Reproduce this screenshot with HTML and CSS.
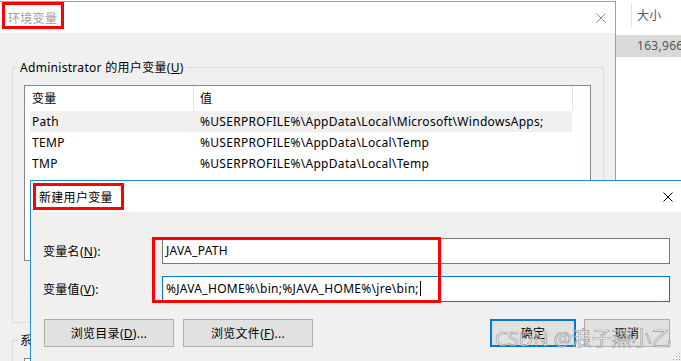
FILE: index.html
```html
<!DOCTYPE html>
<html lang="zh-CN">
<head>
    <meta charset="UTF-8">
    <title>环境变量</title>
    <link rel="stylesheet" href="styles.css">
</head>
<body>

<div class="explorer">
    <div class="ex-head"><span class="ex-col">大小</span></div>
    <div class="ex-row">163,966</div>
</div>

<div class="win env">
    <div class="titlebar">
        <span class="title">环境变量</span>
        <svg class="close" width="10" height="10" viewBox="0 0 10 10"><path d="M0.5 0.5L9.5 9.5M9.5 0.5L0.5 9.5" stroke="#8a8a8a" stroke-width="1"/></svg>
    </div>
    <div class="win-body">
        <fieldset class="group">
            <legend>Administrator 的用户变量(<u>U</u>)</legend>
            <div class="listview">
                <div class="lv-head">
                    <div class="c1">变量</div>
                    <div class="c2">值</div>
                </div>
                <div class="lv-row sel">
                    <div class="c1">Path</div>
                    <div class="c2">%USERPROFILE%\AppData\Local\Microsoft\WindowsApps;</div>
                </div>
                <div class="lv-row">
                    <div class="c1">TEMP</div>
                    <div class="c2">%USERPROFILE%\AppData\Local\Temp</div>
                </div>
                <div class="lv-row">
                    <div class="c1">TMP</div>
                    <div class="c2">%USERPROFILE%\AppData\Local\Temp</div>
                </div>
            </div>
        </fieldset>
        <fieldset class="group second">
            <legend>系统变量(<u>S</u>)</legend>
            <div class="listview"></div>
        </fieldset>
    </div>
</div>

<div class="win dialog">
    <div class="titlebar">
        <span class="title">新建用户变量</span>
        <svg class="close" width="10" height="10" viewBox="0 0 10 10"><path d="M0.5 0.5L9.5 9.5M9.5 0.5L0.5 9.5" stroke="#000" stroke-width="1"/></svg>
    </div>
    <div class="dlg-body">
        <div class="fields">
            <label>变量名(<u>N</u>):</label>
            <div class="textbox">JAVA_PATH</div>
            <label>变量值(<u>V</u>):</label>
            <div class="textbox focus">%JAVA_HOME%\bin;%JAVA_HOME%\jre\bin;<span class="caret"></span></div>
        </div>
        <div class="buttons">
            <div class="btn-group">
                <button class="btn wide">浏览目录(<u>D</u>)...</button>
                <button class="btn wide">浏览文件(<u>F</u>)...</button>
            </div>
            <div class="btn-group right">
                <button class="btn default">确定</button>
                <button class="btn">取消</button>
            </div>
        </div>
    </div>
</div>

<!-- red annotation boxes -->
<div class="mark mark-title"></div>
<div class="mark mark-dlg"></div>
<div class="mark mark-fields"></div>

<div class="watermark">CSDN @浪子燕小乙</div>

<svg class="grip" width="10" height="10" viewBox="0 0 10 10">
    <rect x="8" y="2" width="1" height="1" fill="#999"/>
    <rect x="5" y="5" width="1" height="1" fill="#999"/>
    <rect x="8" y="5" width="1" height="1" fill="#999"/>
    <rect x="2" y="8" width="1" height="1" fill="#999"/>
    <rect x="5" y="8" width="1" height="1" fill="#999"/>
    <rect x="8" y="8" width="1" height="1" fill="#999"/>
</svg>

</body>
</html>
```

FILE: styles.css
```css
body {
    margin: 0;
    width: 681px;
    height: 361px;
    overflow: hidden;
    position: relative;
    background: #ffffff;
    font-family: "Noto Sans", "Noto Sans CJK SC", sans-serif;
    font-size: 12px;
    letter-spacing: 0.3px;
    color: #000;
}

/* explorer column peeking out on the right */
.explorer {
    position: absolute;
    left: 616px;
    top: 0;
    width: 65px;
}
.ex-head {
    padding: 3px 0 0 15px;
}
.ex-col {
    display: block;
    height: 25px;
    line-height: 25px;
    border-left: 1px solid #e5e5e5;
    padding-left: 5px;
    color: #4d5a6b;
}
.ex-row {
    margin-top: 7px;
    height: 22px;
    line-height: 22px;
    padding-left: 21px;
    background: #d9d9d9;
    color: #555;
    white-space: nowrap;
}

/* windows */
.win {
    position: absolute;
    box-sizing: border-box;
    background: #f0f0f0;
}
.titlebar {
    height: 31px;
    background: #fff;
    display: flex;
    align-items: center;
    justify-content: space-between;
    padding: 0 9px 0 8px;
}
.env {
    left: -1px;
    top: 1px;
    width: 617px;
    height: 400px;
    border: 1px solid #a0a0a0;
}
.env .title {
    color: #a0a0a0;
}
.win-body {
    padding: 26px 11px 0 12px;
}
.group {
    margin: 0;
    border: 1px solid #dcdcdc;
    padding: 9px 12px 61px 11px;
}
.group legend {
    padding: 0 2px;
    margin-left: -6px;
    line-height: 17px;
}
.group.second {
    margin-top: 9px;
}
.listview {
    box-sizing: border-box;
    height: 176px;
    border: 1px solid #828790;
    background: #fff;
}
.lv-head {
    display: flex;
    height: 25px;
    line-height: 25px;
}
.lv-head div {
    box-sizing: border-box;
    border-right: 1px solid #e5e5e5;
}
.lv-head .c1 {
    width: 169px;
    padding-left: 7px;
}
.lv-head .c2 {
    width: 379px;
    padding-left: 6px;
}
.lv-row {
    display: flex;
    margin-left: 5px;
    width: 542px;
    height: 21px;
    line-height: 21px;
    white-space: nowrap;
}
.lv-row.sel {
    background: #f0f0f0;
}
.lv-row .c1 {
    width: 163px;
    padding-left: 2px;
    box-sizing: border-box;
}
.lv-row .c2 {
    padding-left: 7px;
}

/* new variable dialog */
.dialog {
    left: 30px;
    top: 180px;
    width: 653px;
    height: 200px;
    border: 1px solid #2a8ad8;
}
.dlg-body {
    padding: 26px 0 0 13px;
}
.fields {
    width: 626px;
    display: grid;
    grid-template-columns: 118px 508px;
    row-gap: 12px;
    align-items: center;
}
.fields label {
    margin-left: -1px;
}
.textbox {
    box-sizing: border-box;
    height: 26px;
    line-height: 24px;
    padding: 0 3px;
    border: 1px solid #7a7a7a;
    background: #fff;
    white-space: nowrap;
}
.textbox.focus {
    border-color: #0078d7;
}
.caret {
    display: inline-block;
    width: 1px;
    height: 15px;
    background: #000;
    vertical-align: -3px;
    margin-left: 1px;
}
.buttons {
    width: 626px;
    margin-top: 17px;
    display: flex;
    justify-content: space-between;
}
.btn-group {
    display: flex;
    gap: 9px;
}
.btn-group.right {
    gap: 8px;
}
.btn {
    box-sizing: border-box;
    width: 86px;
    height: 28px;
    padding: 0;
    font: inherit;
    letter-spacing: inherit;
    color: #000;
    background: #e1e1e1;
    border: 1px solid #adadad;
}
.btn.wide {
    width: 130px;
}
.btn.default {
    border: 2px solid #0078d7;
}

/* annotations */
.mark {
    position: absolute;
    box-sizing: border-box;
    border: 3px solid #ff0000;
}
.mark-title {
    left: 2px;
    top: 2px;
    width: 62px;
    height: 27px;
}
.mark-dlg {
    left: 33px;
    top: 183px;
    width: 91px;
    height: 27px;
}
.mark-fields {
    left: 152px;
    top: 237px;
    width: 289px;
    height: 66px;
}

.watermark {
    position: absolute;
    left: 495px;
    top: 325px;
    font-size: 20px;
    line-height: 28px;
    letter-spacing: 0;
    white-space: nowrap;
    color: rgba(255, 255, 255, 0.6);
    -webkit-text-stroke: 0.7px rgba(110, 110, 110, 0.65);
}

.grip {
    position: absolute;
    right: 0;
    bottom: 0;
}
```
